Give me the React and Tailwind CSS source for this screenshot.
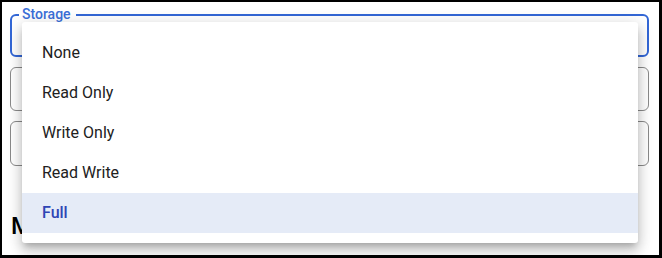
import { useState } from 'react';

const options = ['None', 'Read Only', 'Write Only', 'Read Write', 'Full'];

const App = () => {
  const [value, setValue] = useState('Full');

  return (
    <div className="w-[662px] h-[258px] bg-black pt-[2px] pl-[2px] pr-[3px] pb-[3px] font-['Roboto',sans-serif]">
      <div className="relative w-full h-full bg-white pt-[12px] pl-[8px] pr-[10px] overflow-hidden">
        <div className="flex flex-col gap-[10px]">
          <div className="relative h-[43px] border-2 border-[#3367d6] rounded-[6px]">
            <span className="absolute left-[7px] top-[-10px] bg-white pl-[3px] pr-[5px] text-[14px] leading-[16px] font-medium text-[#3a6fd8]">
              Storage
            </span>
          </div>
          <div className="h-[44px] border border-[#8a8a8a] rounded-[6px]"></div>
          <div className="h-[45px] border border-[#8a8a8a] rounded-[6px]"></div>
        </div>
        <h2 className="mt-[46px] ml-[1px] text-[24px] leading-[28px] font-medium text-black">Mount Options</h2>

        <ul className="absolute left-[20px] top-[20px] w-[616px] bg-white pt-[11px] pb-[10px] rounded-[3px] shadow-[0_5px_6px_-3px_rgba(0,0,0,0.2),0_8px_12px_1px_rgba(0,0,0,0.14),0_3px_16px_2px_rgba(0,0,0,0.12)]">
          {options.map((opt) => (
            <li
              key={opt}
              onClick={() => setValue(opt)}
              className={
                value === opt
                  ? 'h-[40px] flex items-center px-5 text-[16px] font-medium text-[#2f45b5] bg-[#e5ebf7]'
                  : 'h-[40px] flex items-center px-5 text-[16px] text-[#212121]'
              }
            >
              {opt}
            </li>
          ))}
        </ul>
      </div>
    </div>
  );
};

export default App;
